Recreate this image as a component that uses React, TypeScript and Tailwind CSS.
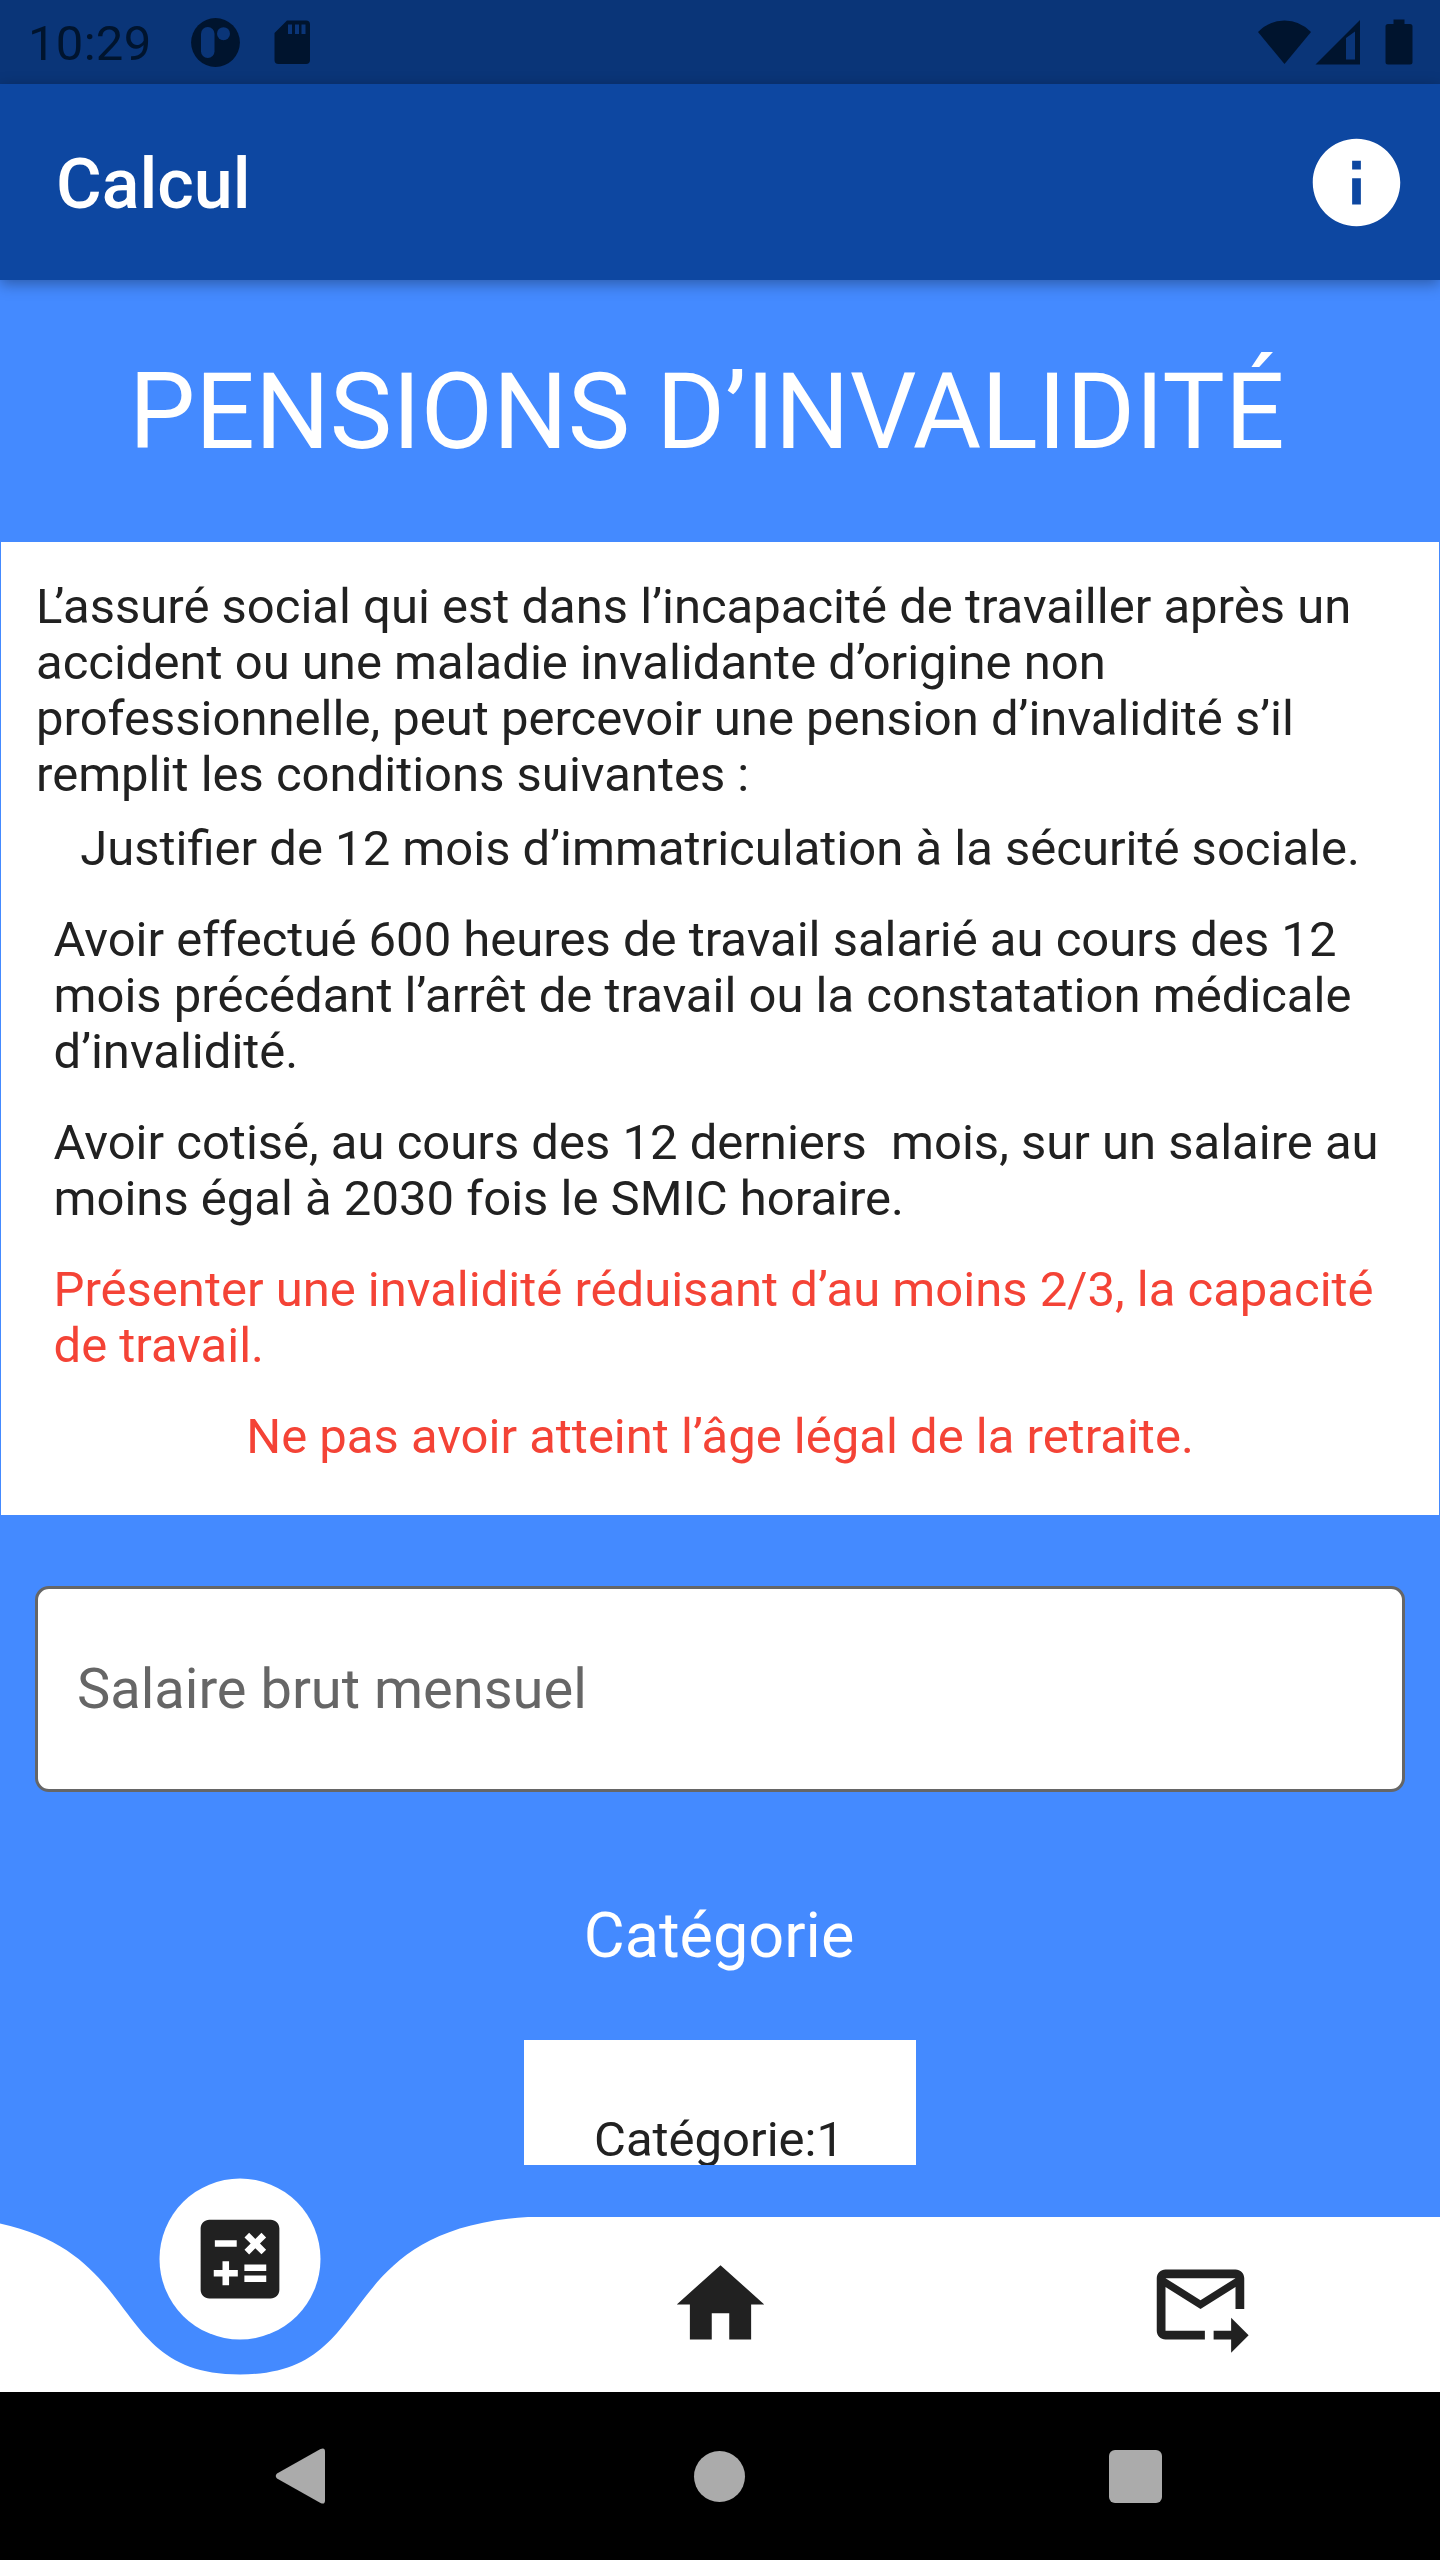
import React from "react";

const RED = "text-[#f44336]";

function StatusBar() {
  return (
    <div className="flex h-[84px] items-center justify-between bg-[#0a3578] pl-[28px] pr-[27px] text-[#00142e]">
      <div className="flex items-center">
        <span className="w-[123px] whitespace-nowrap pt-[3px] text-[49px] leading-[81px] tracking-[0.3px]">10:29</span>
        <svg className="ml-[40px] size-[49px]" viewBox="0 0 49 49">
          <circle cx="24.5" cy="24.5" r="24.4" fill="currentColor" />
          <rect x="10" y="9" width="13.5" height="31" rx="6.7" fill="#0a3578" />
          <circle cx="32.5" cy="15.7" r="6.5" fill="#0a3578" />
        </svg>
        <svg className="ml-[34px] h-[45px] w-[36px]" viewBox="0 0 36 45">
          <path
            fill="currentColor"
            fillRule="evenodd"
            d="M13 0.5H32Q36 0.5 36 4.5V40Q36 44 32 44H4.5Q0.5 44 0.5 40V13ZM14 4.5V14H18V4.5ZM21 4.5V14H25V4.5ZM27.5 4.5V14H31.5V4.5Z"
          />
        </svg>
      </div>
      <div className="flex items-center">
        <svg className="h-[45px] w-[53px]" viewBox="0 0 53 45">
          <path fill="currentColor" d="M0 12Q11 0.5 26.500 0.5T53 12L26.500 44Z" />
        </svg>
        <svg className="ml-[4px] h-[45px] w-[46px]" viewBox="0 0 46 45">
          <path fill="currentColor" fillRule="evenodd" d="M0.500 44.500L45 0V44.500ZM31 18V39.500H40V11.500Z" />
        </svg>
        <svg className="ml-[24px] h-[46px] w-[28px]" viewBox="0 0 28 46">
          <path fill="currentColor" d="M8.500 0.500H19.500V5H25Q27.500 5 27.500 7.500V43Q27.500 45.500 25 45.500H3Q0.500 45.500 0.500 43V7.500Q0.500 5 3 5H8.500Z" />
        </svg>
      </div>
    </div>
  );
}

function AppBar() {
  return (
    <header className="relative z-10 flex h-[196px] items-center justify-between bg-[#0d47a1] pl-[56px] pr-[31px] shadow-[0_4px_14px_rgba(0,0,0,0.34)]">
      <h1 className="pt-[3px] text-[70px] font-medium leading-[82px] text-white">Calcul</h1>
      <svg className="size-[105px]" viewBox="0 0 24 24" fill="white">
        <path d="M12 2C6.480 2 2 6.480 2 12s4.480 10 10 10 10-4.480 10-10S17.520 2 12 2zm1 15h-2v-6h2v6zm0-8h-2V7h2v2z" />
      </svg>
    </header>
  );
}

function Condition({ lines, className = "" }: { lines: string[]; className?: string }) {
  return (
    <li className={`p-[17.5px] ${className}`}>
      {lines.map((line) => (
        <span key={line} className="block whitespace-pre">{line}</span>
      ))}
    </li>
  );
}

function Conditions() {
  return (
    <section className="mx-px h-[973px] shrink-0 bg-white px-[35px] pt-[37px] text-[49px] leading-[56px] text-[#212121]">
      <p className="whitespace-pre">
        <span className="tracking-[-8px]">L</span>’assuré social qui est dans l’incapacité de travailler après un
        {"\n"}accident ou une maladie invalidante d’origine non
        {"\n"}professionnelle, peut percevoir une pension d’invalidité s’il
        {"\n"}remplit les conditions suivantes :
      </p>
      <ul>
        <Condition className="text-center" lines={["Justifier de 12 mois d’immatriculation à la sécurité sociale."]} />
        <Condition
          lines={[
            "Avoir effectué 600 heures de travail salarié au cours des 12",
            "mois précédant l’arrêt de travail ou la constatation médicale",
            "d’invalidité.",
          ]}
        />
        <Condition
          lines={["Avoir cotisé, au cours des 12 derniers  mois, sur un salaire au", "moins égal à 2030 fois le SMIC horaire."]}
        />
        <Condition
          className={RED}
          lines={["Présenter une invalidité réduisant d’au moins 2/3, la capacité", "de travail."]}
        />
        <Condition className={`text-center ${RED}`} lines={["Ne pas avoir atteint l’âge légal de la retraite."]} />
      </ul>
    </section>
  );
}

function BottomBar() {
  return (
    <nav className="relative grid h-[175px] grid-cols-3 text-[#212121]">
      <svg className="absolute inset-0 h-[175px] w-full" viewBox="0 0 1440 175">
        <path
          fill="white"
          d="M-48 0C153.600 13.100 96 157.500 240 157.500C384 157.500 326.400 13.100 528 0H1440V175H-48Z"
        />
      </svg>
      <button className="relative flex size-[161px] -translate-x-[0.5px] -translate-y-[38.500px] items-center justify-center justify-self-center rounded-full bg-white">
        <svg className="size-[105px]" viewBox="0 0 24 24" fill="currentColor">
          <path d="M19 3H5c-1.100 0-2 .9-2 2v14c0 1.100.9 2 2 2h14c1.100 0 2-.9 2-2V5c0-1.100-.9-2-2-2zm-5.970 4.060L14.090 6l1.410 1.410L16.910 6l1.060 1.060-1.410 1.410 1.410 1.410-1.060 1.060-1.410-1.400-1.410 1.410-1.060-1.060 1.410-1.410-1.410-1.420zm-6.780.66h5v1.500h-5v-1.500zM11.500 16h-2v2H8v-2H6v-1.500h2v-2h1.500v2h2V16zm6.500 1.250h-5v-1.500h5v1.500zm0-2.500h-5v-1.500h5v1.500z" />
        </svg>
      </button>
      <button className="relative flex items-center justify-center">
        <svg className="size-[105px]" viewBox="0 0 24 24" fill="currentColor">
          <path d="M10 20v-6h4v6h5v-8h3L12 3 2 12h3v8z" />
        </svg>
      </button>
      <button className="relative flex items-center justify-center">
        <svg className="size-[105px]" viewBox="0 0 24 24" fill="currentColor">
          <path d="M20 4H4c-1.100 0-2 .9-2 2v12c0 1.100.9 2 2 2h9v-2H4V8l8 5 8-5v5h2V6c0-1.100-.9-2-2-2zm-8 7L4 6h16l-8 5zm7 4l4 4-4 4v-3h-4v-2h4v-3z" />
        </svg>
      </button>
    </nav>
  );
}

function SystemBar() {
  return (
    <div className="flex h-[168px] items-center justify-between bg-black pl-[275px] pr-[278px]">
      <svg className="h-[56px] w-[50px]" viewBox="0 0 50 56">
        <path fill="#ababab" d="M2 25.500L45.500 1Q50 -1 50 3.500V52.500Q50 57 45.500 55L2 30.500Q-0.500 28 2 25.500Z" />
      </svg>
      <span className="ml-[5px] size-[51px] rounded-full bg-[#ababab]" />
      <span className="size-[53px] rounded-[6px] bg-[#ababab]" />
    </div>
  );
}

export default function App() {
  return (
    <div className="flex h-[2560px] w-[1440px] flex-col overflow-hidden bg-[#448aff] font-[Roboto,sans-serif]">
      <StatusBar />
      <AppBar />
      <main className="flex h-[1885px] shrink-0 flex-col overflow-hidden">
        <h2 className="h-[262px] shrink-0 whitespace-nowrap pl-[129px] pt-[71px] text-[105px] leading-[123px] text-white">
          PENSIONS D’INVALIDITÉ
        </h2>
        <Conditions />
        <div className="mx-[35px] mt-[71px] flex h-[206px] shrink-0 items-center rounded-[14px] border-[3px] border-[#666666] bg-white pl-[39px] text-[56px] text-[#666666]">
          Salaire brut mensuel
        </div>
        <h3 className="mt-[107px] shrink-0 pr-[2px] text-center text-[63px] leading-[74px] text-white">Catégorie</h3>
        <div className="mt-[67px] h-[140px] w-[392px] shrink-0 self-center bg-white pr-[2px] pt-[72px] text-center text-[49px] leading-[56px] text-[#212121]">
          Catégorie:1
        </div>
      </main>
      <div className="h-[52px] shrink-0" />
      <BottomBar />
      <SystemBar />
    </div>
  );
}
